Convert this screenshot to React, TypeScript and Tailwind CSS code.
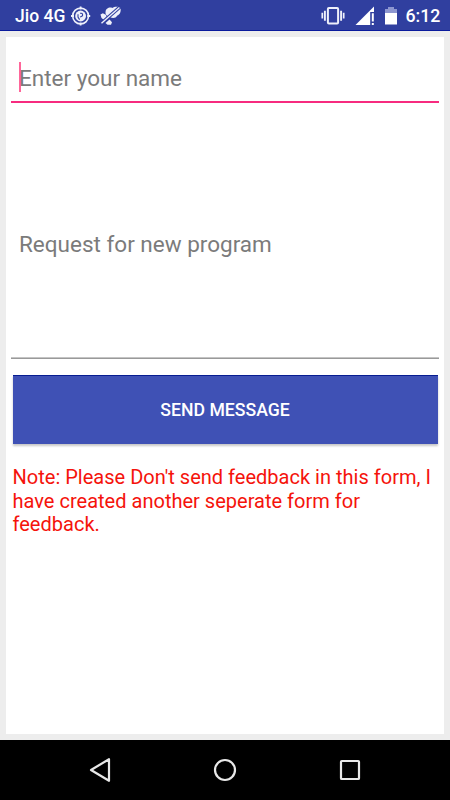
import React from "react";

function StatusBar() {
  return (
    <header className="flex h-[31px] items-center justify-between border-b border-[#0a1a9c] bg-[#303f9f] pl-[15px] pr-[10px] text-[18px] font-medium leading-[30px] text-white">
      <div className="flex items-center">
        <span className="w-[51px] whitespace-nowrap pt-[2px] text-[17.5px]">Jio 4G</span>
        <svg className="ml-[4px] mt-px" width="22" height="22" viewBox="0 0 22 22" fill="none" stroke="#eef0fa">
          <circle cx="10.6" cy="11" r="7.9" strokeWidth="1.6" />
          <path d="M10.6 1.5v3M10.6 17.5v3M1 11h3M17.2 11h3" strokeWidth="1.8" />
          <circle cx="10.6" cy="11" r="5.4" fill="#eef0fa" stroke="none" />
          <path d="M10.2 8.4c2.6-.8 3.4 2.2 1.2 3l-1.3.5M8 9.2v2.8l1.6 2.6" stroke="#303f9f" strokeWidth="1.1" />
        </svg>
        <svg className="ml-[8px] mt-px" width="22" height="20" viewBox="0 0 22 20">
          <path d="M5.6 5.5C5.6 2.6 9.5.6 12.3 2C14.5 0 19.4.4 20.4 2C21.4 5 20 9 17 9.7C16 12.6 10.5 12.6 9 10C6.8 10.4 5 8 5.6 5.5Z" fill="#eef0fa" />
          <path d="M.5 8.5L2.8 7.3L5.8 8.8L6.8 11L4 14L1.5 12Z" fill="#eef0fa" />
          <path d="M5.5 17L9.5 13.5L12 16.2L11 18.8H7.5Z" fill="#eef0fa" />
          <path d="M0 18.5L20 .9" stroke="#303f9f" strokeWidth="3.4" />
          <path d="M1.5 17.3L19.4 1.5" stroke="#eef0fa" strokeWidth="1.4" />
        </svg>
      </div>
      <div className="flex items-center">
        <svg className="mr-[-1px] mt-[2px]" width="24" height="18" viewBox="0 0 24 18" fill="none" stroke="#eef0fa">
          <rect x="6.9" y="1" width="10.2" height="15.4" rx="1" strokeWidth="2" />
          <path d="M3.9 3.7v10M20.1 3.7v10" strokeWidth="1.9" />
          <path d="M1.3 5.8v5.8M22.7 5.8v5.8" strokeWidth="1.7" />
        </svg>
        <svg className="ml-[11px] mt-px" width="20" height="20" viewBox="0 0 20 20" fill="#fff">
          <path d="M.5 19L19 .4V6H15.2V19Z" />
          <path d="M16.8 7.2h2v8.2h-2zM16.8 17h2v2h-2z" />
        </svg>
        <svg className="ml-[9px] mt-[2px]" width="14" height="19" viewBox="0 0 14 19">
          <path d="M4 0h6v2h3v4H1V2h3z" fill="#8d96d0" />
          <path d="M1 6h12v11.5H1z" fill="#fff" />
        </svg>
        <span className="ml-[8px] w-[34.5px] whitespace-nowrap pt-[2px] text-[17.7px]">6:12</span>
      </div>
    </header>
  );
}

export default function App() {
  return (
    <div className="flex h-[800px] w-[450px] flex-col bg-[#ededed] font-[Roboto,sans-serif]">
      <StatusBar />
      <main className="mx-[6px] mb-[6px] mt-[6px] flex flex-1 flex-col bg-white px-[5px]">
        <div className="flex h-[66px] items-center border-b-2 border-[#f72b7f] pl-[8px] pt-[18px]">
          <div className="relative text-[22.5px] leading-[32px] text-[#7b7b7b]">
            <span className="absolute left-0 top-0 h-[30px] w-[2px] bg-[#ff4081]/80" />
            Enter your name
          </div>
        </div>
        <div className="flex h-[255px] items-center pl-[8px] pt-[28px] text-[22.5px] text-[#7b7b7b]">
          <span>Request for new program</span>
        </div>
        <div className="mt-[-1px] h-[2px] shrink-0 border-b border-[#999] bg-[#c4c4c4]" />
        <button className="ml-[1.5px] mt-[16px] h-[69px] w-[425px] border-t border-[#071d91] bg-[#3f51b5] pt-px text-[17.65px] font-medium text-white shadow-[0_2px_2px_rgba(0,0,0,0.22)]">
          SEND MESSAGE
        </button>
        <p className="mt-[22px] whitespace-nowrap pl-[1.5px] text-[20.05px] leading-[23.7px] text-[#f5130b]">
          Note: Please Don't send feedback in this form, I
          <br />
          have created another seperate form for
          <br />
          feedback.
        </p>
      </main>
      <nav className="flex h-[60px] items-center justify-between bg-black pl-[89px] pr-[89px]">
        <svg width="22" height="26" viewBox="0 0 22 26" fill="none" stroke="#e8e8e8" strokeWidth="2.2" strokeLinejoin="round">
          <path d="M20 2.2V23.8L2 13Z" />
        </svg>
        <svg width="24" height="24" viewBox="0 0 24 24" fill="none" stroke="#e8e8e8" strokeWidth="2.2">
          <circle cx="12" cy="12" r="10" />
        </svg>
        <svg width="22" height="22" viewBox="0 0 22 22" fill="none" stroke="#e8e8e8" strokeWidth="2.2">
          <rect x="2" y="2" width="18" height="18" rx=".8" />
        </svg>
      </nav>
    </div>
  );
}
